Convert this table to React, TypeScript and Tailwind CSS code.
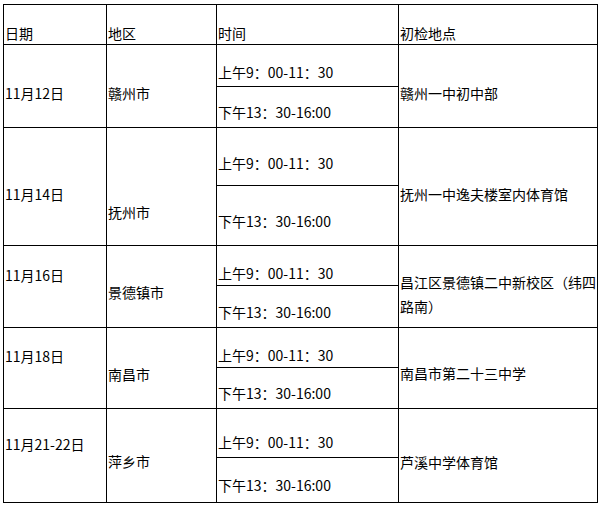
type Row = {
  date: string;
  region: string;
  place: React.ReactNode;
  am: string;
  pm: string;
  datePad: string;
  regionPad: string;
  placePad: string;
  amPad: string;
  pmPad: string;
};

const AM = "上午9：00-11：30";
const PM = "下午13：30-16:00";

const rows: Row[] = [
  {
    date: "11月12日",
    region: "赣州市",
    place: "赣州一中初中部",
    am: AM,
    pm: PM,
    datePad: "pt-[38px]",
    regionPad: "pt-[38px]",
    placePad: "pt-[38px]",
    amPad: "pt-[17px]",
    pmPad: "pt-[15px]",
  },
  {
    date: "11月14日",
    region: "抚州市",
    place: "抚州一中逸夫楼室内体育馆",
    am: AM,
    pm: PM,
    datePad: "pt-[56px]",
    regionPad: "pt-[74px]",
    placePad: "pt-[56px]",
    amPad: "pt-[25px]",
    pmPad: "pt-[25px]",
  },
  {
    date: "11月16日",
    region: "景德镇市",
    place: (
      <span className="leading-[24px]">
        昌江区景德镇二中新校区（纬四
        <br />
        路南）
      </span>
    ),
    am: AM,
    pm: PM,
    datePad: "pt-[19px]",
    regionPad: "pt-[36px]",
    placePad: "pt-[24px]",
    amPad: "pt-[17px]",
    pmPad: "pt-[16px]",
  },
  {
    date: "11月18日",
    region: "南昌市",
    place: "南昌市第二十三中学",
    am: AM,
    pm: PM,
    datePad: "pt-[18px]",
    regionPad: "pt-[36px]",
    placePad: "pt-[35px]",
    amPad: "pt-[17px]",
    pmPad: "pt-[15px]",
  },
  {
    date: "11月21-22日",
    region: "萍乡市",
    place: "芦溪中学体育馆",
    am: AM,
    pm: PM,
    datePad: "pt-[25px]",
    regionPad: "pt-[42px]",
    placePad: "pt-[43px]",
    amPad: "pt-[23px]",
    pmPad: "pt-[17px]",
  },
];

const cell = "border-r border-b border-black pl-px whitespace-nowrap";

export default function App() {
  return (
    <div
      className="w-[602px] h-[507px] bg-white text-black text-[14px] leading-[20px] pt-1 pl-[3px]"
      style={{ fontFamily: '"Noto Sans CJK SC", "Noto Sans", sans-serif' }}
    >
      <div className="grid w-[595px] grid-cols-[103px_110px_182px_199px] grid-rows-[40px_42px_41px_58px_60px_40px_42px_40px_41px_49px_45px] border-l border-t border-black">
        <div className={`${cell} pt-[18px]`}>日期</div>
        <div className={`${cell} pt-[18px]`}>地区</div>
        <div className={`${cell} pt-[18px]`}>时间</div>
        <div className={`${cell} pt-[18px]`}>初检地点</div>
        {rows.map((r) => (
          <div key={r.date} className="contents">
            <div className={`${cell} row-span-2 ${r.datePad}`}>{r.date}</div>
            <div className={`${cell} row-span-2 ${r.regionPad}`}>{r.region}</div>
            <div className={`${cell} ${r.amPad}`}>{r.am}</div>
            <div className={`${cell} row-span-2 ${r.placePad}`}>{r.place}</div>
            <div className={`${cell} ${r.pmPad}`}>{r.pm}</div>
          </div>
        ))}
      </div>
    </div>
  );
}
